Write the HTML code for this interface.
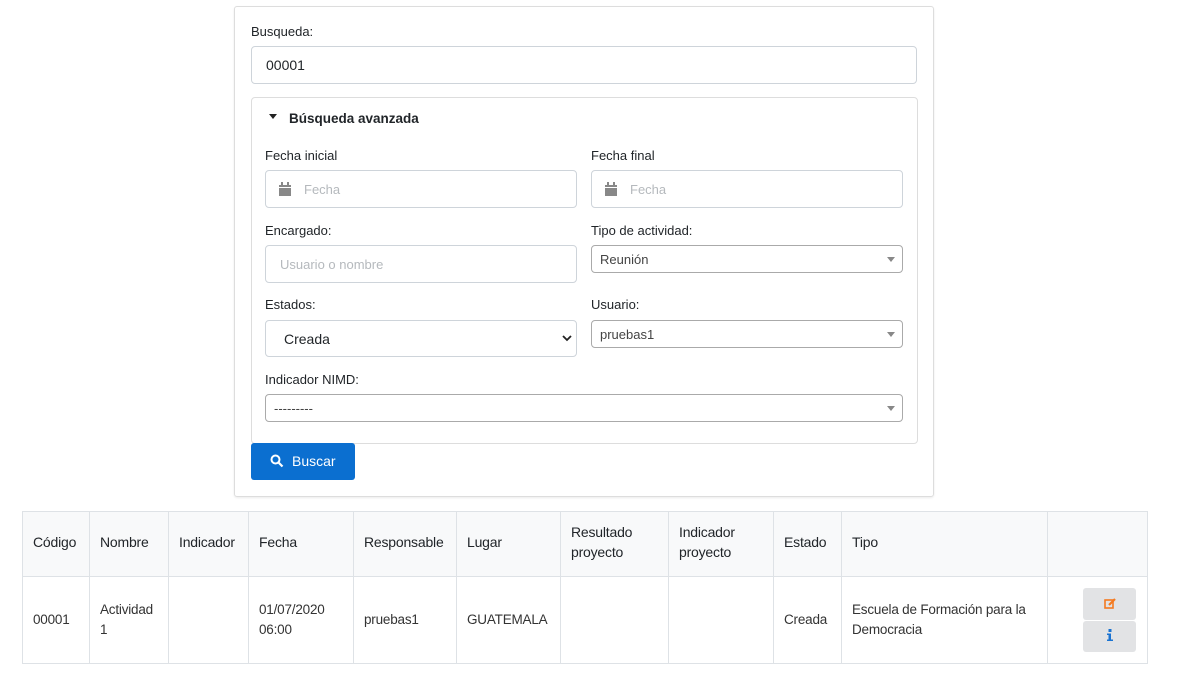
<!DOCTYPE html>
<html><head><meta charset="utf-8"><style>
*{box-sizing:border-box;margin:0;padding:0}
body{width:1186px;height:678px;background:#fff;font-family:"Liberation Sans",Arial,sans-serif;font-size:14px;color:#212529;position:relative;overflow:hidden}
.a{position:absolute}
.box{position:absolute;border:1px solid #ced4da;border-radius:4px;background:#fff}
.lbl{position:absolute;font-size:13px;color:#212529}
.ph{color:#b5b9bd;font-size:13px}
.s2{position:absolute;border:1px solid #aaa;border-radius:4px;background:#fff;font-size:13px;color:#444;padding:6px 8px}
.s2:after{content:"";position:absolute;right:7px;top:11px;border:4px solid transparent;border-top:5px solid #888}
table{position:absolute;left:22px;top:511px;width:1126px;border-collapse:collapse;font-size:14px;letter-spacing:-0.2px}
td,th{border:1px solid #dee2e6;padding:0 10px;font-weight:normal;text-align:left;vertical-align:middle;line-height:20px}
th{background:#f8f9fa;height:65px;padding-bottom:4px}
td{height:87px;font-size:13.5px;color:#333}
</style></head><body>
<div class="a" style="left:234px;top:6px;width:700px;height:491px;border:1px solid #ddd;border-radius:3px;box-shadow:0 1px 2px rgba(0,0,0,.08)"></div>
<div class="lbl" style="left:251px;top:24px">Busqueda:</div>
<div class="box" style="left:251px;top:46px;width:666px;height:38px;padding:10px 14px;font-size:14px">00001</div>
<div class="a" style="left:251px;top:97px;width:667px;height:347px;border:1px solid #ddd;border-radius:4px"></div>
<div class="a" style="left:269px;top:114px;border:4px solid transparent;border-top:5px solid #222"></div>
<div class="a" style="left:289px;top:111px;font-weight:bold;font-size:13.5px">Búsqueda avanzada</div>
<div class="lbl" style="left:265px;top:148px">Fecha inicial</div>
<div class="lbl" style="left:591px;top:148px">Fecha final</div>
<div class="box" style="left:265px;top:170px;width:312px;height:38px"><svg class="a" style="left:13px;top:11px" width="12" height="14"><rect x="0" y="3" width="12" height="11" fill="#888"/><rect x="2" y="0" width="2" height="4" fill="#888"/><rect x="8" y="0" width="2" height="4" fill="#888"/><rect x="0" y="5" width="12" height="1" fill="#fff"/></svg><span class="a ph" style="left:38px;top:11px">Fecha</span></div>
<div class="box" style="left:591px;top:170px;width:312px;height:38px"><svg class="a" style="left:13px;top:11px" width="12" height="14"><rect x="0" y="3" width="12" height="11" fill="#888"/><rect x="2" y="0" width="2" height="4" fill="#888"/><rect x="8" y="0" width="2" height="4" fill="#888"/><rect x="0" y="5" width="12" height="1" fill="#fff"/></svg><span class="a ph" style="left:38px;top:11px">Fecha</span></div>
<div class="lbl" style="left:265px;top:223px">Encargado:</div>
<div class="lbl" style="left:591px;top:223px">Tipo de actividad:</div>
<div class="box" style="left:265px;top:245px;width:312px;height:38px"><span class="a ph" style="left:14px;top:11px">Usuario o nombre</span></div>
<div class="s2" style="left:591px;top:245px;width:312px;height:28px">Reunión</div>
<div class="lbl" style="left:265px;top:297px">Estados:</div>
<div class="lbl" style="left:591px;top:297px">Usuario:</div>
<div class="box" style="left:265px;top:320px;width:312px;height:37px;padding:10px 18px;font-size:14px">Creada</div>
<svg class="a" style="left:562px;top:334px" width="10" height="8"><path d="M1 2l4 4 4-4" stroke="#222" stroke-width="1.8" fill="none"/></svg>
<div class="s2" style="left:591px;top:320px;width:312px;height:28px">pruebas1</div>
<div class="lbl" style="left:265px;top:372px">Indicador NIMD:</div>
<div class="s2" style="left:265px;top:394px;width:638px;height:28px">---------</div>
<div class="a" style="left:251px;top:443px;width:104px;height:37px;background:#0b6fd0;border-radius:3px;color:#fff;font-size:14px;padding:10px 0 0 41px">Buscar</div>
<svg class="a" style="left:270px;top:454px" width="14" height="14"><circle cx="5.5" cy="5.5" r="4" stroke="#fff" stroke-width="2" fill="none"/><path d="M8.5 8.5l4 4" stroke="#fff" stroke-width="2.2"/></svg>
<table>
<tr><th style="width:67px">Código</th><th style="width:79px">Nombre</th><th style="width:80px">Indicador</th><th style="width:105px">Fecha</th><th style="width:103px">Responsable</th><th style="width:104px">Lugar</th><th style="width:108px">Resultado proyecto</th><th style="width:105px">Indicador proyecto</th><th style="width:68px">Estado</th><th style="width:206px">Tipo</th><th></th></tr>
<tr><td>00001</td><td>Actividad 1</td><td></td><td>01/07/2020 06:00</td><td>pruebas1</td><td>GUATEMALA</td><td></td><td></td><td>Creada</td><td>Escuela de Formación para la Democracia</td><td style="position:relative">
<div class="a" style="left:35px;top:11px;width:53px;height:32px;background:#e2e3e5;border-radius:3px"></div>
<div class="a" style="left:35px;top:44px;width:53px;height:31px;background:#e2e3e5;border-radius:3px"></div>
<svg class="a" style="left:56px;top:20px" width="13" height="13"><rect x="1" y="3" width="8" height="8" stroke="#f47a20" stroke-width="1.6" fill="none"/><path d="M5 8l6-6" stroke="#f47a20" stroke-width="2.2"/></svg>
<svg class="a" style="left:59px;top:52px" width="6" height="12"><rect x="1.5" y="0" width="3" height="3" fill="#1a73d1"/><path d="M0 4.5h4v6h2v1.5H0v-1.5h1.5v-4.5H0z" fill="#1a73d1"/></svg>
</td></tr>
</table>
</body></html>
